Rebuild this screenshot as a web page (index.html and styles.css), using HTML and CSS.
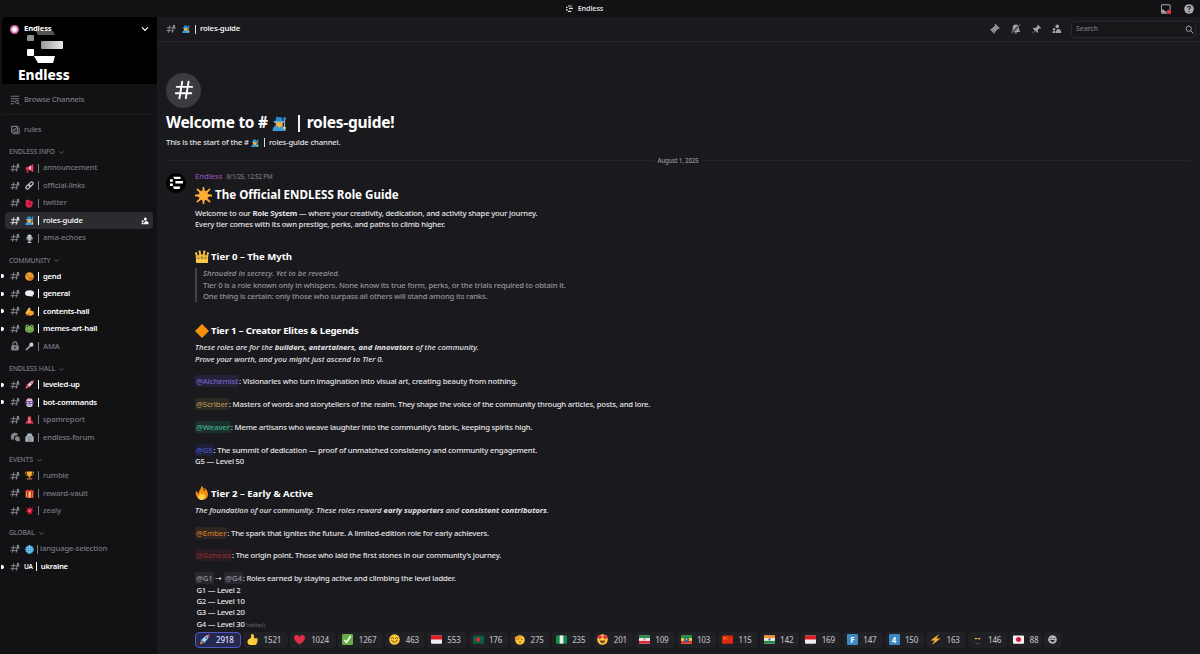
FILE: index.html
```html
<!DOCTYPE html>
<html lang="en">
<head>
<meta charset="utf-8">
<title>Endless</title>
<link rel="stylesheet" href="styles.css">
</head>
<body>
<svg class="defs" aria-hidden="true">
  <symbol id="hash" viewBox="0 0 24 24"><path d="M9 4 6 20M17 10l-2 10M3 9h11M2 16h16" fill="none" stroke="currentColor" stroke-width="2.3" stroke-linecap="round"/><circle cx="19" cy="4.5" r="3" fill="currentColor"/><path d="M13.8 11c0-5 10.200-5 10.200 0z" fill="currentColor"/></symbol>
  <symbol id="bighash" viewBox="0 0 24 24"><path d="M10 3 7 21M17 3l-3 18M4 8.500h17M3 15.500h17" fill="none" stroke="currentColor" stroke-width="2" stroke-linecap="round"/></symbol>
  <symbol id="logo" viewBox="0 0 36 36"><path d="M9 2h20v6H12zM0 9h8v7H0zM15 14h21v7H15zM0 21h8v7H0zM8 29h21l-3 7H11z" fill="currentColor"/></symbol>
  <symbol id="down" viewBox="0 0 12 12"><path d="m2 4 4 4 4-4" fill="none" stroke="currentColor" stroke-width="1.800" stroke-linecap="round"/></symbol>
  <symbol id="browse" viewBox="0 0 24 24"><path d="M2 3h20M2 9h20M2 15h9M2 21h8" fill="none" stroke="currentColor" stroke-width="2.500"/><circle cx="16.500" cy="16.500" r="3.500" fill="none" stroke="currentColor" stroke-width="2.200"/><path d="m19 19 4 4" stroke="currentColor" stroke-width="2.400"/></symbol>
  <symbol id="rulebook" viewBox="0 0 24 24"><path d="M4 3h12M4 3v14h14V3z" fill="none" stroke="currentColor" stroke-width="3" stroke-linejoin="round"/><path d="M22 6v15H6" fill="none" stroke="currentColor" stroke-width="2.500"/><path d="m7 10 3 3 6-7" fill="none" stroke="currentColor" stroke-width="2.500"/></symbol>
  <symbol id="lock" viewBox="0 0 24 24"><path d="M7 11V7a5 5 0 0 1 10 0v4" fill="none" stroke="currentColor" stroke-width="2.800"/><rect x="3" y="10" width="18" height="13" rx="3" fill="currentColor"/><circle cx="12" cy="16" r="2" fill="#121214"/></symbol>
  <symbol id="forum" viewBox="0 0 24 24"><path d="M2 12C2 5 7 1 13 2c5 1 6 4 6 6-7-1-11 4-9 10H1c2-2 2-3 1-6z" fill="currentColor"/><path d="M12 14c1-5 9-5 11 0 1 3 0 5 1 8h-7c-4 0-6-4-5-8z" fill="currentColor"/></symbol>
  <symbol id="people" viewBox="0 0 24 24"><circle cx="13" cy="6" r="4.500" fill="currentColor"/><circle cx="5" cy="13" r="3" fill="currentColor"/><path d="M9 22c0-13 14-13 14 0zM1 22c0-5 5-7 7-4v4z" fill="currentColor"/></symbol>
  <symbol id="thread" viewBox="0 0 24 24"><path d="M13 1 23 11M1 13l10 10" stroke="currentColor" stroke-width="2.500" stroke-linecap="round"/><path d="m13 3 8 8-10 10-8-8z" fill="currentColor"/><path d="m11 7 6 8M7 11l6 8" stroke="#1a1a1e" stroke-width="1"/></symbol>
  <symbol id="belloff" viewBox="0 0 24 24"><path d="M12 1c6 0 8 4 8 9v4l3 6H1l3-6v-4c0-5 2-9 8-9zM8 21h8c0 4-8 4-8 0z" fill="currentColor"/><path d="M24 0 0 24" stroke="#1a1a1e" stroke-width="4.500"/><path d="M23 1 1 23" stroke="currentColor" stroke-width="2" stroke-linecap="round"/></symbol>
  <symbol id="pin" viewBox="0 0 24 24"><path d="m14 1 9 9-2 1-2-1-5 5 1 5-2 2-5-5-6 6-1-1 6-6-5-5 2-2 5 1 5-5-1-2z" fill="currentColor"/></symbol>
  <symbol id="search" viewBox="0 0 24 24"><circle cx="10" cy="10" r="7" fill="none" stroke="currentColor" stroke-width="2.500"/><path d="m15 15 7 7" stroke="currentColor" stroke-width="2.500" stroke-linecap="round"/></symbol>
  <symbol id="inbox" viewBox="0 0 24 24"><path d="M4 2h15a3 3 0 0 1 3 3v14a3 3 0 0 1-3 3H4a3 3 0 0 1-3-3V5a3 3 0 0 1 3-3z" fill="none" stroke="currentColor" stroke-width="2.500"/><path d="M2 14h5c1 5 9 5 10 0h4v7H3z" fill="currentColor"/><circle cx="19.500" cy="19" r="6" fill="#e8384d" stroke="#121214"/></symbol>
  <symbol id="help" viewBox="0 0 24 24"><circle cx="12" cy="12" r="11.500" fill="currentColor"/><path d="M8.500 9c0-5 7-4.500 7-.5 0 3-3.500 2.500-3.500 5.500" fill="none" stroke="#121214" stroke-width="2.500"/><circle cx="12" cy="17.500" r="1.600" fill="#121214"/></symbol>

  <symbol id="mega" viewBox="0 0 24 24"><path d="M2 8h7l10-6v17L9 15H2z" fill="#e52955"/><path d="M4 14h5v9H5z" fill="#dd2e57"/><path d="M10 7l6-3v12l-6-2z" fill="#f4b8c6"/><path d="M18 1h4v20h-4z" fill="#f23b62"/></symbol>
  <symbol id="link" viewBox="0 0 24 24"><g fill="none" stroke="#c3ccd5" stroke-width="3.200" transform="rotate(-45 12 12)"><rect x="0" y="8" width="13" height="8" rx="4"/><rect x="11" y="8" width="13" height="8" rx="4"/></g></symbol>
  <symbol id="bird" viewBox="0 0 24 24"><path d="M2 3c5-2 10-1 12 3 3-3 6-1 6 2l3 2-3 2c1 8-5 12-11 11-7-1-8-6-7-11z" fill="#dd2450"/><path d="m11 8 6 6-8 1" fill="#7e1630"/></symbol>
  <symbol id="mage" viewBox="0 0 24 24"><path d="m7 1 8 1 3 7H5z" fill="#258bd2"/><path d="M3 8h16v3H3z" fill="#5bb1ed"/><path d="M6 10h11v6c-2 4-9 4-11 0z" fill="#f1b43c"/><path d="M1 24c0-7 4-9 7-8l4 3 4-3c4 0 6 3 6 8z" fill="#3a9be0"/><path d="M20 4v19" stroke="#9aa7b0" stroke-width="2"/><circle cx="20" cy="4" r="2.500" fill="#3b88c3"/><circle cx="20" cy="19" r="2" fill="#ffdc5d"/></symbol>
  <symbol id="mic" viewBox="0 0 24 24"><rect x="6" y="1" width="12" height="15" rx="6" fill="#ccd6dd"/><path d="M4 9c0 12 16 12 16 0" fill="none" stroke="#8999a6" stroke-width="2.500"/><path d="M10 17h4v4h3v3H7v-3h3z" fill="#b4c0c9"/><path d="M7 7h10M7 11h10" stroke="#66757f"/></symbol>
  <symbol id="face" viewBox="0 0 24 24"><circle cx="12" cy="12" r="11.500" fill="#fcc63c"/><path d="M5 10c1-3 4-3 5 0M14 10c1-3 4-3 5 0M6 14c3 5 9 5 12 0" fill="none" stroke="#664500" stroke-width="1.800" stroke-linecap="round"/></symbol>
  <symbol id="blush" viewBox="0 0 24 24"><circle cx="12" cy="12" r="11.500" fill="#f6a134"/><path d="M5 9c1-2 4-2 4 0M15 9c1-2 4-2 4 0M8 15c2-2 5-2 7 0" fill="none" stroke="#664500" stroke-width="1.800"/><path d="m13 15 8-2v5l-6 5-5-4z" fill="#db6b20"/></symbol>
  <symbol id="bubble" viewBox="0 0 24 24"><ellipse cx="12" cy="11" rx="12" ry="8" fill="#e7ecef"/><path d="m14 17 6 5-1-7z" fill="#e7ecef"/></symbol>
  <symbol id="write" viewBox="0 0 24 24"><path d="m1 16 5-8 5-7 4 2-1 6 9 3v8l-9 3-9-2z" fill="#ffb636"/><path d="m1 23 10-7 3 2-11 6z" fill="#e04a25"/><path d="M12 14h10M11 18h11" stroke="#c97c1c"/></symbol>
  <symbol id="frog" viewBox="0 0 24 24"><circle cx="6" cy="6" r="5" fill="#77b255"/><circle cx="18" cy="6" r="5" fill="#77b255"/><ellipse cx="12" cy="14" rx="12" ry="9" fill="#77b255"/><circle cx="6" cy="6" r="2" fill="#17362a"/><circle cx="18" cy="6" r="2" fill="#17362a"/><path d="M2 14c5 6 15 6 20 0" fill="none" stroke="#3e721d" stroke-width="1.500"/></symbol>
  <symbol id="handmic" viewBox="0 0 24 24"><circle cx="17" cy="7" r="5.500" fill="#ccd6dd"/><path d="m12 8 4 4L4 23l-3-3z" fill="#8c99a5"/></symbol>
  <symbol id="rocket" viewBox="0 0 24 24"><path d="m3 13 6-5 7 7-5 7-2-5-4-1z" fill="#2794e8"/><path d="M7 14C10 6 16 2 23 1c-1 7-5 13-12 16z" fill="#c9d5df"/><path d="M17 2l6-1-1 6z" fill="#dd2e44"/><circle cx="16" cy="8" r="2.600" fill="#3576b8"/><path d="m2 23 1-6 3-2 3 3-2 3z" fill="#f4762b"/></symbol>
  <symbol id="pinkrocket" viewBox="0 0 24 24"><path d="m3 13 6-5 7 7-5 7-2-5-4-1z" fill="#c1314f"/><path d="M7 14C10 6 16 2 23 1c-1 7-5 13-12 16z" fill="#e4d6de"/><path d="M17 2l6-1-1 6z" fill="#dd2e44"/><circle cx="16" cy="8" r="2.300" fill="#9c526f"/><path d="m1 23 2-6 3-2 3 3-2 3z" fill="#f26a6b"/></symbol>
  <symbol id="bot" viewBox="0 0 24 24"><path d="M4 6c1-7 15-7 16 0v15c-3 4-13 4-16 0z" fill="#d3c8de"/><path d="M1 8h22v8H1z" fill="#644d95"/><path d="M5 10h5v4H5zM14 10h5v4h-5z" fill="#f8b5d0"/><path d="M8 19h8" stroke="#735b95" stroke-width="2"/><path d="M8 2h8" stroke="#d34d73" stroke-width="3"/></symbol>
  <symbol id="siren" viewBox="0 0 24 24"><path d="M7 16 8 4h8l1 12z" fill="#ed3656"/><path d="M10 6h2v9h-3z" fill="#ffa5b0"/><path d="M4 15h16l3 8H1z" fill="#d92b4a"/><path d="M9 17h6v3H9z" fill="#dce3e7"/></symbol>
  <symbol id="bank" viewBox="0 0 24 24"><path d="M6 1h12v4l5 5v13H1V10l5-5z" fill="#aeb8c1"/><path d="M4 11h16M8 15v6M12 15v6M16 15v6" stroke="#46515c" stroke-width="1.500"/></symbol>
  <symbol id="cup" viewBox="0 0 24 24"><path d="M5 3H1c0 7 3 9 6 9M19 3h4c0 7-3 9-6 9" fill="none" stroke="#e9a52b" stroke-width="2"/><path d="M5 1h14c0 10-3 14-7 14S5 11 5 1z" fill="#ffac33"/><path d="M10 14h4v5h-4z" fill="#dc8128"/><path d="M5 19h14v4H5z" fill="#a95c3a"/></symbol>
  <symbol id="gift" viewBox="0 0 24 24"><path d="M2 7h20v16H2z" fill="#fda43a"/><path d="M1 4h22v5H1z" fill="#ee5b38"/><path d="M5 5h5v18H5zM15 5h5v18h-5z" fill="#dd2e35"/><path d="m12 7-6-5M12 7l6-5" stroke="#e93e38" stroke-width="3"/><path d="M10 7h5v16h-5z" fill="#ffd278"/></symbol>
  <symbol id="boom" viewBox="0 0 24 24"><path d="m12 1 2 6 8-5-4 8 5 2-6 3 3 8-7-4-5 4v-7l-7-1 6-4-4-8 7 4z" fill="#db1938"/><path d="m12 8 2 4 3 1-5 3-1-3-4-2 5-1z" fill="#ff7b91"/></symbol>
  <symbol id="globe" viewBox="0 0 24 24"><circle cx="12" cy="12" r="11.500" fill="#2796cf"/><path d="M1 12h22M12 1v22M3 7h18M3 17h18M12 1C4 7 4 17 12 23M12 1c8 6 8 16 0 22" fill="none" stroke="#bbdff4" stroke-width="1.200"/></symbol>
  <symbol id="sun" viewBox="0 0 24 24"><path d="M12 0v24M0 12h24M3.500 3.500l17 17M20.500 3.500l-17 17" stroke="#ffac33" stroke-width="2.500" stroke-linecap="round"/><path d="m12 2 2.500 4 4-1.500-1 4.500 4.500 3-4.500 3 1 4.500-4-1.500-2.500 4-2.500-4-4 1.500 1-4.500L2 12l4.500-3-1-4.500 4 1.500z" fill="#ffac33"/></symbol>
  <symbol id="crown" viewBox="0 0 24 24"><path d="m1 5 5 5 2-8 4 7 4-7 2 8 5-5-1 17H2z" fill="#f5b83b"/><path d="M2 17h20v5H2z" fill="#ffcc4d"/><circle cx="6" cy="14" r="1.500" fill="#9a7a35"/><circle cx="12" cy="13" r="2" fill="#5c913b"/><circle cx="18" cy="14" r="1.500" fill="#9a7a35"/><circle cx="2" cy="6" r="2" fill="#ffcc4d"/><circle cx="22" cy="6" r="2" fill="#ffcc4d"/><circle cx="8" cy="3" r="2" fill="#ffcc4d"/><circle cx="16" cy="3" r="2" fill="#ffcc4d"/></symbol>
  <symbol id="diamond" viewBox="0 0 24 24"><path d="M12 0 24 12 12 24 0 12z" fill="#f4900c"/></symbol>
  <symbol id="fire" viewBox="0 0 24 24"><path d="M2 9c3 1 3 4 4 5 0-6 4-7 5-14 5 3 4 7 4 9 2 0 2-4 1-6 4 3 7 8 6 13-1 10-18 11-20 0-1-3-1-5 0-7z" fill="#f4900c"/><path d="M6 17c2 0 2-4 4-5 0 3 3 4 4 1 4 2 5 10-2 11-5 0-7-4-6-7z" fill="#ffcc4d"/></symbol>
  <symbol id="thumb" viewBox="0 0 24 24"><path d="M7 10c3-2 2-5 2-8 0-3 6-3 6 2v5h6c3 0 3 3 1 4 2 1 2 4 0 4 1 2 0 3-1 3 0 2-1 4-5 4H7c-4 0-6-3-6-7 0-3 2-6 6-7z" fill="#ffd23d"/><path d="M15 13h7M15 17h7" stroke="#dda023"/></symbol>
  <symbol id="heart" viewBox="0 0 24 24"><path d="M12 23C5 18 0 13 0 8 0 1 9 0 12 6c3-6 12-5 12 2 0 5-5 10-12 15z" fill="#dd2e44"/></symbol>
  <symbol id="check" viewBox="0 0 24 24"><rect width="24" height="24" rx="3" fill="#67ae48"/><path d="m5 13 5 5 9-14" fill="none" stroke="#fff" stroke-width="3.500"/></symbol>
  <symbol id="salute" viewBox="0 0 24 24"><circle cx="13" cy="13" r="10.500" fill="#ffca3e"/><circle cx="9" cy="12" r="1.500" fill="#664500"/><circle cx="17" cy="12" r="1.500" fill="#664500"/><path d="M10 18h6" stroke="#664500" stroke-width="1.500"/><path d="M1 7 13 3l7 3-8 4-7 6z" fill="#eda02c"/></symbol>
  <symbol id="hearteyes" viewBox="0 0 24 24"><circle cx="12" cy="12" r="11.500" fill="#ffc93c"/><path d="M6 12 1 6c0-5 5-5 6-2 3-2 5 1 3 4zM18 12l-4-4c-2-3 0-6 3-4 1-3 6-3 6 2z" fill="#e42b45"/><path d="M6 14h12c-1 8-11 8-12 0z" fill="#754720"/></symbol>
  <symbol id="redwhite" viewBox="0 0 24 18"><rect width="24" height="18" rx="2" fill="#eee"/><path d="M0 9V2q0-2 2-2h20q2 0 2 2v7z" fill="#dc1f26"/></symbol>
  <symbol id="bangla" viewBox="0 0 24 18"><rect width="24" height="18" rx="2" fill="#075f48"/><circle cx="11" cy="9" r="5" fill="#d42c38"/></symbol>
  <symbol id="nigeria" viewBox="0 0 24 18"><rect width="24" height="18" rx="2" fill="#138c50"/><path d="M8 0h8v18H8z" fill="#eee"/></symbol>
  <symbol id="iran" viewBox="0 0 24 18"><rect width="24" height="18" rx="2" fill="#eee"/><path d="M0 0h24v6H0z" fill="#238e50"/><path d="M0 12h24v6H0z" fill="#d82939"/><circle cx="12" cy="9" r="2" fill="#d86470"/></symbol>
  <symbol id="ethiopia" viewBox="0 0 24 18"><rect width="24" height="18" rx="2" fill="#f3ce29"/><path d="M0 0h24v6H0z" fill="#24904a"/><path d="M0 12h24v6H0z" fill="#db3036"/><circle cx="12" cy="9" r="5.500" fill="#2864a8"/><path d="m12 5 2 6-5-3h6l-5 3z" fill="#eecf45"/></symbol>
  <symbol id="china" viewBox="0 0 24 18"><rect width="24" height="18" rx="2" fill="#dd2910"/><path d="m6 3 2 6-5-4h6L4 9z" fill="#ffde02"/><circle cx="11" cy="3" r="1" fill="#ffde02"/><circle cx="12" cy="8" r="1" fill="#ffde02"/></symbol>
  <symbol id="india" viewBox="0 0 24 18"><rect width="24" height="18" rx="2" fill="#eee"/><path d="M0 0h24v6H0z" fill="#f3932d"/><path d="M0 12h24v6H0z" fill="#248b43"/><circle cx="12" cy="9" r="2.500" fill="#515cab"/></symbol>
  <symbol id="japan" viewBox="0 0 24 18"><rect width="24" height="18" rx="2" fill="#f4f4f4"/><circle cx="12" cy="9" r="5.500" fill="#dc153d"/></symbol>
  <symbol id="bolt" viewBox="0 0 24 24"><path d="M20 0 1 14h9L4 24l19-14h-9z" fill="#ffac33"/></symbol>
  <symbol id="dim" viewBox="0 0 24 24"><path d="M6 10h5M13 10h5" stroke="#f1bd35" stroke-width="2.500"/><path d="M7 19c3 3 7 3 10 0" fill="none" stroke="#55555d" stroke-width="2"/></symbol>
  <symbol id="react" viewBox="0 0 24 24"><circle cx="12" cy="12" r="11.500" fill="currentColor"/><circle cx="8" cy="9" r="1.800" fill="#222226"/><circle cx="16" cy="9" r="1.800" fill="#222226"/><path d="M6 13h12c-1 7-11 7-12 0z" fill="#222226"/></symbol>
</svg>

<header class="titlebar">
  <div class="apptitle"><svg><use href="#logo"/></svg><span>Endless</span></div>
  <div class="winicons"><svg><use href="#inbox"/></svg><svg><use href="#help"/></svg></div>
</header>
<div class="app">
  <nav class="sidebar">
    <div class="banner">
      <div class="server"><i class="badge"></i><b>Endless</b><svg><use href="#down"/></svg></div>
      <svg class="biglogo" viewBox="0 0 36 32"><defs><linearGradient id="fade"><stop offset="0" stop-color="#999"/><stop offset="1" stop-color="#e8e8e8"/></linearGradient></defs><path d="M9 0h17l2 4H11z" fill="#555"/><rect y="4" width="7" height="6" rx="1" fill="#8e8e8e"/><rect x="14" y="10" width="22" height="8" rx="1" fill="url(#fade)"/><rect y="18" width="7" height="7" rx="1" fill="#fff"/><path d="M7 25h21l-2 7H11z" fill="#fff"/></svg>
      <strong class="wordmark">Endless</strong>
    </div>
    <div class="tool browse"><svg><use href="#browse"/></svg>Browse Channels</div>
    <div class="tool rules"><svg><use href="#rulebook"/></svg>rules</div>

    <div class="cat">ENDLESS INFO<svg><use href="#down"/></svg></div>
    <div class="ch"><svg><use href="#hash"/></svg><svg class="e"><use href="#mega"/></svg><i></i>announcement</div>
    <div class="ch"><svg><use href="#hash"/></svg><svg class="e"><use href="#link"/></svg><i></i>official-links</div>
    <div class="ch"><svg><use href="#hash"/></svg><svg class="e"><use href="#bird"/></svg><i></i>twitter</div>
    <div class="ch active"><svg><use href="#hash"/></svg><svg class="e"><use href="#mage"/></svg><i></i>roles-guide<svg class="invite"><use href="#people"/></svg></div>
    <div class="ch"><svg><use href="#hash"/></svg><svg class="e"><use href="#mic"/></svg><i></i>ama-echoes</div>
    <div class="cat">COMMUNITY<svg><use href="#down"/></svg></div>
    <div class="ch unread"><svg><use href="#hash"/></svg><svg class="e"><use href="#blush"/></svg><i></i>gend</div>
    <div class="ch unread"><svg><use href="#hash"/></svg><svg class="e"><use href="#bubble"/></svg><i></i>general</div>
    <div class="ch unread"><svg><use href="#hash"/></svg><svg class="e"><use href="#write"/></svg><i></i>contents-hall</div>
    <div class="ch unread"><svg><use href="#hash"/></svg><svg class="e"><use href="#frog"/></svg><i></i>memes-art-hall</div>
    <div class="ch"><svg><use href="#lock"/></svg><svg class="e"><use href="#handmic"/></svg><i></i>AMA</div>
    <div class="cat">ENDLESS HALL<svg><use href="#down"/></svg></div>
    <div class="ch unread"><svg><use href="#hash"/></svg><svg class="e"><use href="#pinkrocket"/></svg><i></i>leveled-up</div>
    <div class="ch unread"><svg><use href="#hash"/></svg><svg class="e"><use href="#bot"/></svg><i></i>bot-commands</div>
    <div class="ch"><svg><use href="#hash"/></svg><svg class="e"><use href="#siren"/></svg><i></i>spamreport</div>
    <div class="ch"><svg><use href="#forum"/></svg><svg class="e"><use href="#bank"/></svg><i></i>endless-forum</div>
    <div class="cat">EVENTS<svg><use href="#down"/></svg></div>
    <div class="ch"><svg><use href="#hash"/></svg><svg class="e"><use href="#cup"/></svg><i></i>rumble</div>
    <div class="ch"><svg><use href="#hash"/></svg><svg class="e"><use href="#gift"/></svg><i></i>reward-vault</div>
    <div class="ch"><svg><use href="#hash"/></svg><svg class="e"><use href="#boom"/></svg><i></i>zealy</div>
    <div class="cat">GLOBAL<svg><use href="#down"/></svg></div>
    <div class="ch tight"><svg><use href="#hash"/></svg><svg class="e"><use href="#globe"/></svg><i></i>language-selection</div>
    <div class="ch unread tight ua"><svg><use href="#hash"/></svg><small>UA</small><i></i>ukraine</div>
  </nav>

  <main class="main">
    <header class="topbar">
      <svg class="th"><use href="#hash"/></svg><svg class="te"><use href="#mage"/></svg><i></i><b>roles-guide</b>
      <div class="actions"><svg><use href="#thread"/></svg><svg><use href="#belloff"/></svg><svg><use href="#pin"/></svg><svg><use href="#people"/></svg></div>
      <div class="search"><span>Search</span><svg><use href="#search"/></svg></div>
    </header>
    <section class="welcome">
      <div class="circle"><svg><use href="#bighash"/></svg></div>
      <h1>Welcome to #<svg><use href="#mage"/></svg><i></i>roles-guide!</h1>
      <p>This is the start of the #<svg><use href="#mage"/></svg><i></i>roles-guide channel.</p>
    </section>
    <div class="date"><span>August 1, 2025</span></div>
    <article class="message">
      <div class="avatar"><svg><use href="#logo"/></svg></div>
      <div class="body">
        <div class="author"><span>Endless</span><time>8/1/25, 12:52 PM</time></div>
        <h2><svg><use href="#sun"/></svg>The Official ENDLESS Role Guide</h2>
        <p>Welcome to our <b>Role System</b> — where your creativity, dedication, and activity shape your journey.</p>
        <p>Every tier comes with its own prestige, perks, and paths to climb higher.</p>
        <h3><svg><use href="#crown"/></svg>Tier 0 – The Myth</h3>
        <blockquote>
          <p><em>Shrouded in secrecy. Yet to be revealed.</em></p>
          <p>Tier 0 is a role known only in whispers. None know its true form, perks, or the trials required to obtain it.</p>
          <p>One thing is certain: only those who surpass all others will stand among its ranks.</p>
        </blockquote>
        <h3 class="tier1"><svg><use href="#diamond"/></svg>Tier 1 – Creator Elites &amp; Legends</h3>
        <p><em>These roles are for the <b>builders, entertainers, and innovators</b> of the community.</em></p>
        <p><em>Prove your worth, and you might just ascend to Tier 0.</em></p>
        <p class="gap"><span class="role alchemist">@Alchemist</span>: Visionaries who turn imagination into visual art, creating beauty from nothing.</p>
        <p class="gap"><span class="role scriber">@Scriber</span>: Masters of words and storytellers of the realm. They shape the voice of the community through articles, posts, and lore.</p>
        <p class="gap"><span class="role weaver">@Weaver</span>: Meme artisans who weave laughter into the community’s fabric, keeping spirits high.</p>
        <p class="gap"><span class="role g5">@G5</span>: The summit of dedication — proof of unmatched consistency and community engagement.</p>
        <p>G5 — Level 50</p>
        <h3><svg><use href="#fire"/></svg>Tier 2 – Early &amp; Active</h3>
        <p><em>The foundation of our community. These roles reward <b>early supporters</b> and <b>consistent contributors</b>.</em></p>
        <p class="gap"><span class="role ember">@Ember</span>: The spark that ignites the future. A limited-edition role for early achievers.</p>
        <p class="gap"><span class="role genesis">@Genesis</span>: The origin point. Those who laid the first stones in our community’s journey.</p>
        <p class="gap"><span class="role">@G1</span> ➝ <span class="role">@G4</span>: Roles earned by staying active and climbing the level ladder.</p>
        <div class="levels"><p>G1 — Level 2</p><p>G2 — Level 10</p><p>G3 — Level 20</p><p>G4 — Level 30<small>(edited)</small></p></div>
        <div class="reactions">
          <div class="r wide mine"><svg><use href="#rocket"/></svg>2918</div>
          <div class="r wide"><svg><use href="#thumb"/></svg>1521</div>
          <div class="r wide"><svg><use href="#heart"/></svg>1024</div>
          <div class="r wide"><svg><use href="#check"/></svg>1267</div>
          <div class="r"><svg><use href="#face"/></svg>463</div>
          <div class="r"><svg><use href="#redwhite"/></svg>553</div>
          <div class="r"><svg><use href="#bangla"/></svg>176</div>
          <div class="r"><svg><use href="#salute"/></svg>275</div>
          <div class="r"><svg><use href="#nigeria"/></svg>235</div>
          <div class="r"><svg><use href="#hearteyes"/></svg>201</div>
          <div class="r"><svg><use href="#iran"/></svg>109</div>
          <div class="r"><svg><use href="#ethiopia"/></svg>103</div>
          <div class="r"><svg><use href="#china"/></svg>115</div>
          <div class="r"><svg><use href="#india"/></svg>142</div>
          <div class="r"><svg><use href="#redwhite"/></svg>169</div>
          <div class="r"><span class="key">F</span>147</div>
          <div class="r"><span class="key">4</span>150</div>
          <div class="r"><svg><use href="#bolt"/></svg>163</div>
          <div class="r"><svg><use href="#dim"/></svg>146</div>
          <div class="r two"><svg><use href="#japan"/></svg>88</div>
          <div class="r add"><svg><use href="#react"/></svg></div>
        </div>
      </div>
    </article>
  </main>
</div>
</body>
</html>
```

FILE: styles.css
```css
* { box-sizing: border-box; }
body { margin: 0; height: 654px; overflow: hidden; background: #121214; color: #e4e4e7; font: 500 7.7px/11.4px "Noto Sans", "Open Sans", sans-serif; letter-spacing: -.18px; }
h1, h2, h3, p, blockquote { margin: 0; }
svg { flex: none; }
.defs { position: absolute; width: 0; height: 0; }

.titlebar { display: grid; grid-template-columns: 1fr auto 1fr; align-items: center; height: 17px; }
.apptitle { grid-column: 2; display: flex; align-items: center; gap: 5px; margin-left: -31px; font-size: 7.3px; font-weight: 600; color: #ddd; }
.apptitle svg { width: 7px; height: 7px; }
.winicons { display: flex; justify-content: flex-end; gap: 13px; padding-right: 6px; color: #aaaab1; }
.winicons svg { width: 10px; height: 10px; }

.app { display: flex; height: 637px; }
.sidebar { width: 158px; padding-left: 2px; border-right: 1px solid #1c1c20; color: #787980; }
.banner { height: 67px; background: #000; border-radius: 4px 0 0; overflow: hidden; }
.server { display: flex; align-items: center; height: 24px; padding: 0 8px; color: #fff; font-size: 7.7px; }
.server b { flex: 1; margin-left: 5px; }
.server svg { width: 8px; height: 8px; }
.badge { width: 9px; height: 9px; border-radius: 50%; background: radial-gradient(#fff 25%, #d35aa0 60%, #7b62bd); }
.biglogo { display: block; width: 36px; height: 32px; margin: -10px 0 0 25px; }
.wordmark { display: block; margin: 4px 0 0 16px; font: 800 13.7px/15px "Noto Sans", sans-serif; letter-spacing: 0; color: #fff; }
.tool { display: flex; align-items: center; gap: 4px; padding-left: 8px; }
.tool svg { width: 10px; height: 10px; }
.browse { height: 31px; margin-right: 5px; padding-top: 2px; border-bottom: 1px solid #1d1d20; }
.rules { height: 30px; margin-bottom: -6.6px; }
.cat { display: flex; align-items: center; height: 20.9px; padding: 6px 0 0 7px; font-size: 6.9px; }
.cat svg { width: 5px; height: 5px; margin: 1px 0 0 4px; }
.ch { position: relative; display: flex; align-items: center; height: 17.5px; padding-left: 8px; letter-spacing: -.15px; }
.ch > svg:first-child { width: 10px; height: 10px; color: #84858c; }
.ch .e { width: 9px; height: 9px; margin-left: 5px; }
.ch i { width: 1px; height: 9px; margin: 0 4px 0 4px; background: currentColor; }
.ch.unread { color: #fff; font-weight: 600; letter-spacing: -.22px; }
.ch.unread::before { content: ""; position: absolute; left: -1px; width: 3px; height: 4px; border-radius: 0 2px 2px 0; background: #fff; }
.ch.active { margin: 0 4px 0 3px; padding-left: 5px; border-radius: 4px; background: #2c2c30; color: #fff; }
.ch.active > svg:first-child { color: #ddd; }
.ch .invite { width: 8px; height: 8px; margin: 0 4px 0 auto; }
.ch.tight i { margin: 0 2px 0 3px; }
.ua small { margin-left: 4px; font-size: 6.5px; }
.ch.ua i { margin: 0 4px 0 3px; }

.main { flex: 1; background: #1a1a1e; }
.topbar { display: flex; align-items: center; height: 25px; padding: 0 4px 0 8px; border-bottom: 1px solid #26262a; color: #eee; }
.topbar .th { width: 10px; height: 10px; color: #888991; }
.topbar .te { width: 8px; height: 8px; margin-left: 6px; }
.topbar i { width: 1px; height: 9px; margin: 0 4px 0 5px; background: #ddd; }
.topbar b { font-weight: 600; }
.actions { display: flex; gap: 11px; margin-left: auto; color: #a2a3a9; }
.actions svg { width: 9.7px; height: 9.7px; }
.search { display: flex; align-items: center; justify-content: space-between; width: 125px; height: 17px; margin-left: 9px; padding: 0 1px 0 4px; border: 1px solid #29292e; border-radius: 4px; background: #17171a; color: #777880; font-size: 7px; letter-spacing: -.1px; }
.search svg { width: 9px; height: 9px; color: #a2a3a9; }

.welcome { padding: 30.5px 8px 0; }
.circle { display: grid; place-items: center; width: 35px; height: 35px; border-radius: 50%; background: #3a3a40; color: #fff; }
.circle svg { width: 22px; height: 22px; }
.welcome h1 { display: flex; align-items: center; height: 22px; margin-top: 4.500px; color: #fff; font-size: 15.5px; letter-spacing: -.28px; }
.welcome h1 svg { width: 15px; height: 17px; margin-left: 4px; }
.welcome h1 i { width: 2px; height: 17px; margin: 0 7px 0 11px; background: #eee; }
.welcome p { display: flex; align-items: center; height: 17px; letter-spacing: -.15px; }
.welcome p svg { width: 8px; height: 8px; margin-left: 2px; }
.welcome p i { width: 1px; height: 9px; margin: 0 4px 0 5px; background: #ddd; }
.date { display: flex; align-items: center; gap: 4px; height: 18px; margin: .5px 7px 0 8px; padding-right: 3px; color: #93949b; font-size: 6.3px; letter-spacing: -.25px; }
.date::before, .date::after { content: ""; flex: 1; height: 1px; background: #26262a; }

.message { display: flex; padding: 1.500px 8px 0; }
.avatar { display: grid; place-items: center; flex: none; width: 20px; height: 20px; margin-top: 1.500px; border-radius: 50%; background: #000; color: #fff; }
.avatar svg { width: 13px; height: 13px; }
.body { margin-left: 9px; }
.body p { height: 11.4px; white-space: nowrap; }
.author { display: flex; gap: 4px; height: 11px; color: #8b50b4; letter-spacing: -.05px; }
.author time { color: #777880; font-size: 6.2px; line-height: 12px; letter-spacing: -.2px; }
.body h2, .body h3 { display: flex; align-items: center; color: #fff; white-space: nowrap; }
.body h2 { gap: 3px; height: 26px; font-size: 11.6px; letter-spacing: 0; }
.body h2 svg { width: 17px; height: 17px; }
.body h3 { gap: 2px; height: 16px; margin-top: 17.900px; margin-bottom: 3.500px; font-size: 9.6px; letter-spacing: 0; }
.body h3 svg { width: 14px; height: 14px; }
.body h3.tier1 { letter-spacing: -.16px; }
.body em { letter-spacing: .02px; }
blockquote { margin-bottom: 20.4px; padding-left: 6px; border-left: 2px solid #414147; color: #94959c; }
.body p.gap { margin-top: 11.4px; }
.role { padding: 1px; border-radius: 2px; background: #28282e; color: #91929b; letter-spacing: -.1px; }
.alchemist { background: #242238; color: #7563c9; }
.scriber { background: #2c2924; color: #b0924e; }
.weaver { background: #1b302e; color: #46ad85; }
.g5 { background: #1e2038; color: #4a54c6; }
.ember { background: #30251f; color: #ca7727; }
.genesis { background: #2a1c20; color: #852f31; }
.levels { padding-left: 1.500px; letter-spacing: -.25px; }
.levels small { margin-left: 2px; color: #5d5e65; font-size: 5px; letter-spacing: 0; }
.reactions { display: flex; gap: 2px; margin-top: 1.500px; }
.r { display: flex; align-items: center; justify-content: space-between; flex: none; width: 39.6px; height: 16px; padding: 0 6px 0 4px; border-radius: 4px; background: #212125; color: #b6b7bd; font-size: 8px; }
.r svg { width: 11px; height: 11px; }
.r.wide { width: 45.6px; padding-right: 7px; }
.r.mine { border: 1px solid #4e57c4; padding: 0 6px 0 3px; background: #25284f; color: #dcdffd; }
.r.two { width: 33px; padding-right: 4px; }
.r.add { width: 18px; }
.r.add svg { width: 9px; height: 9px; }
.key { display: grid; place-items: center; width: 11px; height: 11px; border-radius: 1px; background: #3b88c3; color: #fff; font-weight: 700; }
```
